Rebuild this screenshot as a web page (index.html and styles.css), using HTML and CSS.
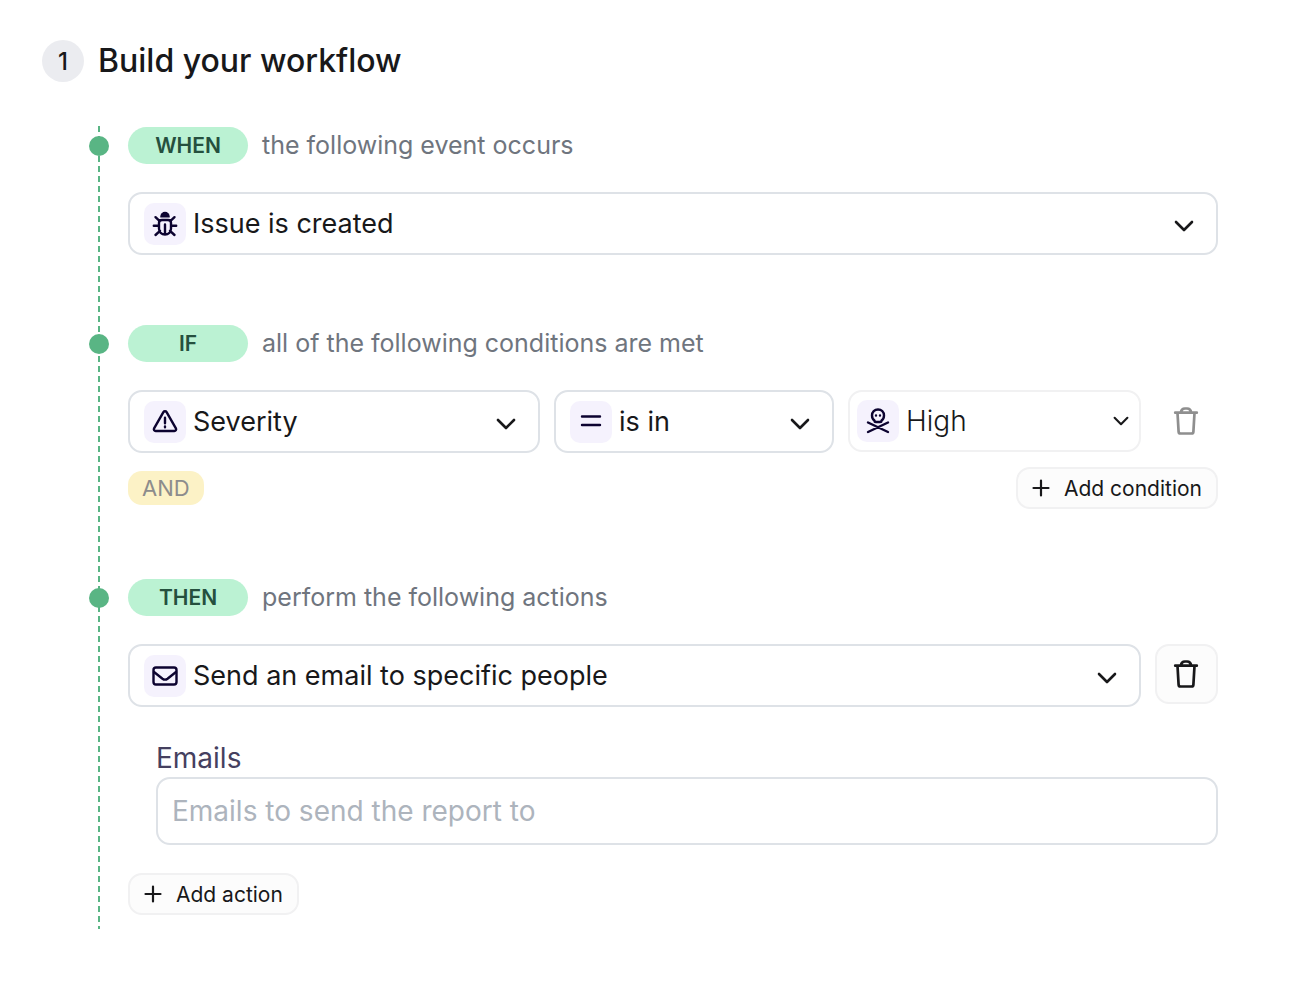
FILE: index.html
```html
<!DOCTYPE html>
<html lang="en">
<head>
<meta charset="utf-8">
<meta name="viewport" content="width=device-width, initial-scale=1">
<title>Build your workflow</title>
<link rel="stylesheet" href="styles.css">
</head>
<body>
<svg class="sprite" aria-hidden="true">
  <symbol id="chevron" viewBox="0 0 20 12"><path d="M2 2l8 8 8-8"/></symbol>
  <symbol id="plus" viewBox="0 0 18 18"><path d="M9 1.500v15M1.500 9h15"/></symbol>
  <symbol id="trash" viewBox="0 0 27 30"><path d="M2.200 6.700h21.600M4.500 7l1.100 18.600a2 2 0 0 0 2 1.900h10.800a2 2 0 0 0 2-1.900L21.500 7M7.800 6.400c.5-2.600 1.900-3.900 4-3.900h2.400c2.100 0 3.500 1.300 4 3.900"/></symbol>
</svg>
<main class="page">
  <header class="header">
    <span class="number">1</span>
    <h1 class="title">Build your workflow</h1>
  </header>
  <form class="workflow">
    <section class="step">
      <div class="step-head"><span class="keyword">WHEN</span><span class="caption">the following event occurs</span></div>
      <div class="row">
        <div class="field">
          <span class="tile"><svg class="icon" viewBox="0 0 26 26" aria-hidden="true"><path class="solid" d="M8.300 6.400V5.500a4.700 4.700 0 0 1 9.400 0v.9z"/><path d="M10 9h6c2 0 3 1.200 3 3v5.500c0 3.700-2.600 6-6 6s-6-2.300-6-6V12c0-1.800 1-3 3-3zM13 13.500v9M1.800 14.700H7M19 14.700h5.200M3.500 6.200l4.200 4M22.500 6.200l-4.200 4M3.500 24l4.500-4.200M22.500 24L18 19.800"/></svg></span>
          <select class="select" aria-label="Event"><option>Issue is created</option></select>
          <svg class="chevron" aria-hidden="true"><use href="#chevron"/></svg>
        </div>
      </div>
    </section>
    <section class="step">
      <div class="step-head"><span class="keyword">IF</span><span class="caption">all of the following conditions are met</span></div>
      <div class="row row-condition">
        <div class="field">
          <span class="tile"><svg class="icon" viewBox="0 0 26 26" aria-hidden="true"><path d="M11.400 3.200a1.900 1.900 0 0 1 3.200 0l9.300 16.100a1.800 1.800 0 0 1-1.600 2.700H3.700a1.800 1.800 0 0 1-1.600-2.700zM13 8.700v5.500M13 17.400v.8"/></svg></span>
          <select class="select" aria-label="Condition"><option>Severity</option></select>
          <svg class="chevron" aria-hidden="true"><use href="#chevron"/></svg>
        </div>
        <div class="field">
          <span class="tile"><svg class="icon" viewBox="0 0 26 26" aria-hidden="true"><path d="M4 7.500h18M4 16h18"/></svg></span>
          <select class="select" aria-label="Operator"><option>is in</option></select>
          <svg class="chevron" aria-hidden="true"><use href="#chevron"/></svg>
        </div>
        <div class="field field-value">
          <span class="tile"><svg class="icon" viewBox="0 0 26 26" aria-hidden="true"><path d="M9.500 12.500C7.800 11.400 7 9.600 7 7.500 7 4 9.600 1.500 13 1.500S19 4 19 7.500c0 2.100-.8 3.900-2.500 5v.2c0 .8-.7 1.300-1.500 1.300h-4c-.8 0-1.500-.5-1.500-1.300zM11 7.500v.1M15 7.500v.1M3 14.500l20 9.500M23 14.500L3 24"/></svg></span>
          <select class="select" aria-label="Value"><option>High</option></select>
          <svg class="chevron" aria-hidden="true"><use href="#chevron"/></svg>
        </div>
        <button class="remove" type="button" aria-label="Remove condition" disabled><svg class="trash" aria-hidden="true"><use href="#trash"/></svg></button>
      </div>
      <div class="row row-footer">
        <span class="joiner">AND</span>
        <button class="add" type="button"><svg class="plus" aria-hidden="true"><use href="#plus"/></svg>Add condition</button>
      </div>
    </section>
    <section class="step">
      <div class="step-head"><span class="keyword">THEN</span><span class="caption">perform the following actions</span></div>
      <div class="row">
        <div class="field">
          <span class="tile"><svg class="icon" viewBox="0 0 26 26" aria-hidden="true"><rect x="1.500" y="4.500" width="23" height="17" rx="2.500"/><path d="M2 9l8.500 6.700c1.600 1.200 3.400 1.200 5 0L24 9"/></svg></span>
          <select class="select" aria-label="Action"><option>Send an email to specific people</option></select>
          <svg class="chevron" aria-hidden="true"><use href="#chevron"/></svg>
        </div>
        <button class="remove" type="button" aria-label="Remove action"><svg class="trash" aria-hidden="true"><use href="#trash"/></svg></button>
      </div>
      <div class="details">
        <label class="label" for="emails">Emails</label>
        <input class="input" id="emails" type="text" placeholder="Emails to send the report to">
      </div>
      <button class="add" type="button"><svg class="plus" aria-hidden="true"><use href="#plus"/></svg>Add action</button>
    </section>
  </form>
</main>
</body>
</html>
```

FILE: styles.css
```css
* { box-sizing: border-box; }

body {
  margin: 0;
  background: #fff;
  color: #18181a;
  font-family: Inter, "Liberation Sans", sans-serif;
}

button, input, select { font: inherit; color: inherit; }

svg {
  flex: none;
  fill: none;
  stroke: currentColor;
  stroke-linecap: round;
  stroke-linejoin: round;
}

.sprite { display: none; }

.page { padding: 40px 80px 40px 42px; }

.header {
  display: flex;
  align-items: center;
  gap: 14px;
}

.number {
  display: grid;
  place-items: center;
  width: 42px;
  height: 42px;
  border-radius: 50%;
  background: #ebecf0;
  font-size: 24px;
  font-weight: 500;
}

.title {
  margin: 0;
  font-size: 32px;
  font-weight: 500;
  line-height: 42px;
}

.workflow {
  display: flex;
  flex-direction: column;
  gap: 70px;
  margin: 44px 0 0 56px;
  padding: 1px 0 14px 30px;
  background: repeating-linear-gradient(#59b584 0 6px, transparent 6px 10px) 0 0 / 2px 100% no-repeat;
}

.step {
  display: flex;
  flex-direction: column;
}

.step-head {
  position: relative;
  display: flex;
  align-items: flex-start;
  gap: 14px;
  margin-bottom: 28px;
}

.step-head::before {
  content: "";
  position: absolute;
  left: -39px;
  top: 9px;
  width: 20px;
  height: 20px;
  border-radius: 50%;
  background: #59b584;
}

.keyword {
  width: 120px;
  border-radius: 19px;
  background: #bbf2d3;
  color: #25503e;
  font-size: 21px;
  font-weight: 600;
  line-height: 37px;
  text-align: center;
}

.caption {
  color: #6f757e;
  font-size: 25px;
  line-height: 36px;
}

.row {
  display: flex;
  align-items: flex-start;
  gap: 14px;
}

.row-condition {
  display: grid;
  grid-template-columns: 412fr 280fr 293fr 63px;
}

.field {
  position: relative;
  display: flex;
  flex: 1;
  align-items: center;
  min-width: 0;
  height: 63px;
  border: 2px solid #dee2e7;
  border-radius: 14px;
  padding-left: 14px;
}

.field-value {
  height: 62px;
  border-color: #f1f1f2;
  padding-left: 7px;
  font-weight: 300;
}

.tile {
  display: grid;
  flex: none;
  place-items: center;
  width: 42px;
  height: 42px;
  border-radius: 10px;
  background: #f5f2fd;
  color: #0c0330;
}

.icon {
  width: 26px;
  height: 26px;
  stroke-width: 2.4;
}

.solid { fill: currentColor; stroke: none; }

.select {
  flex: 1;
  align-self: stretch;
  min-width: 0;
  border: 0;
  padding: 0 50px 1px 7px;
  appearance: none;
  background: none;
  font-size: 27px;
}

.field-value .select { padding-bottom: 0; font-size: 28px; }

.chevron {
  position: absolute;
  top: 26px;
  right: 22px;
  width: 20px;
  height: 12px;
  stroke-width: 2.6;
  pointer-events: none;
}

.field-value .chevron {
  top: 24px;
  right: 10px;
  width: 16px;
  height: 10px;
}

.remove {
  display: grid;
  flex: none;
  place-items: center;
  width: 63px;
  height: 60px;
  border: 2px solid #f1f1f2;
  border-radius: 14px;
  padding: 0;
  background: #fcfcfc;
}

.remove:disabled {
  height: 62px;
  border-color: transparent;
  background: none;
  color: #8f8f8f;
}

.trash {
  width: 27px;
  height: 30px;
  stroke-width: 2.7;
}

.row-footer {
  align-items: center;
  justify-content: space-between;
  margin-top: 14px;
}

.joiner {
  border-radius: 14px;
  padding: 0 14px;
  background: #fcf2c6;
  color: #8c8c8c;
  font-size: 22px;
  line-height: 34px;
}

.add {
  display: flex;
  align-items: center;
  align-self: flex-start;
  gap: 14px;
  height: 42px;
  border: 2px solid #f1f1f2;
  border-radius: 14px;
  padding: 0 14px;
  background: #fcfcfc;
  font-size: 21px;
}

.plus {
  width: 18px;
  height: 18px;
  stroke-width: 2.2;
}

.details {
  display: flex;
  flex-direction: column;
  margin: 32px 0 28px 28px;
}

.label {
  align-self: flex-start;
  color: #45405f;
  font-size: 28px;
  line-height: 38px;
}

.input {
  width: 100%;
  height: 68px;
  border: 2px solid #dee2e7;
  border-radius: 14px;
  padding: 0 14px;
  background: #fff;
  font-size: 28px;
}

.input::placeholder { color: #adb4bd; opacity: 1; }
```
